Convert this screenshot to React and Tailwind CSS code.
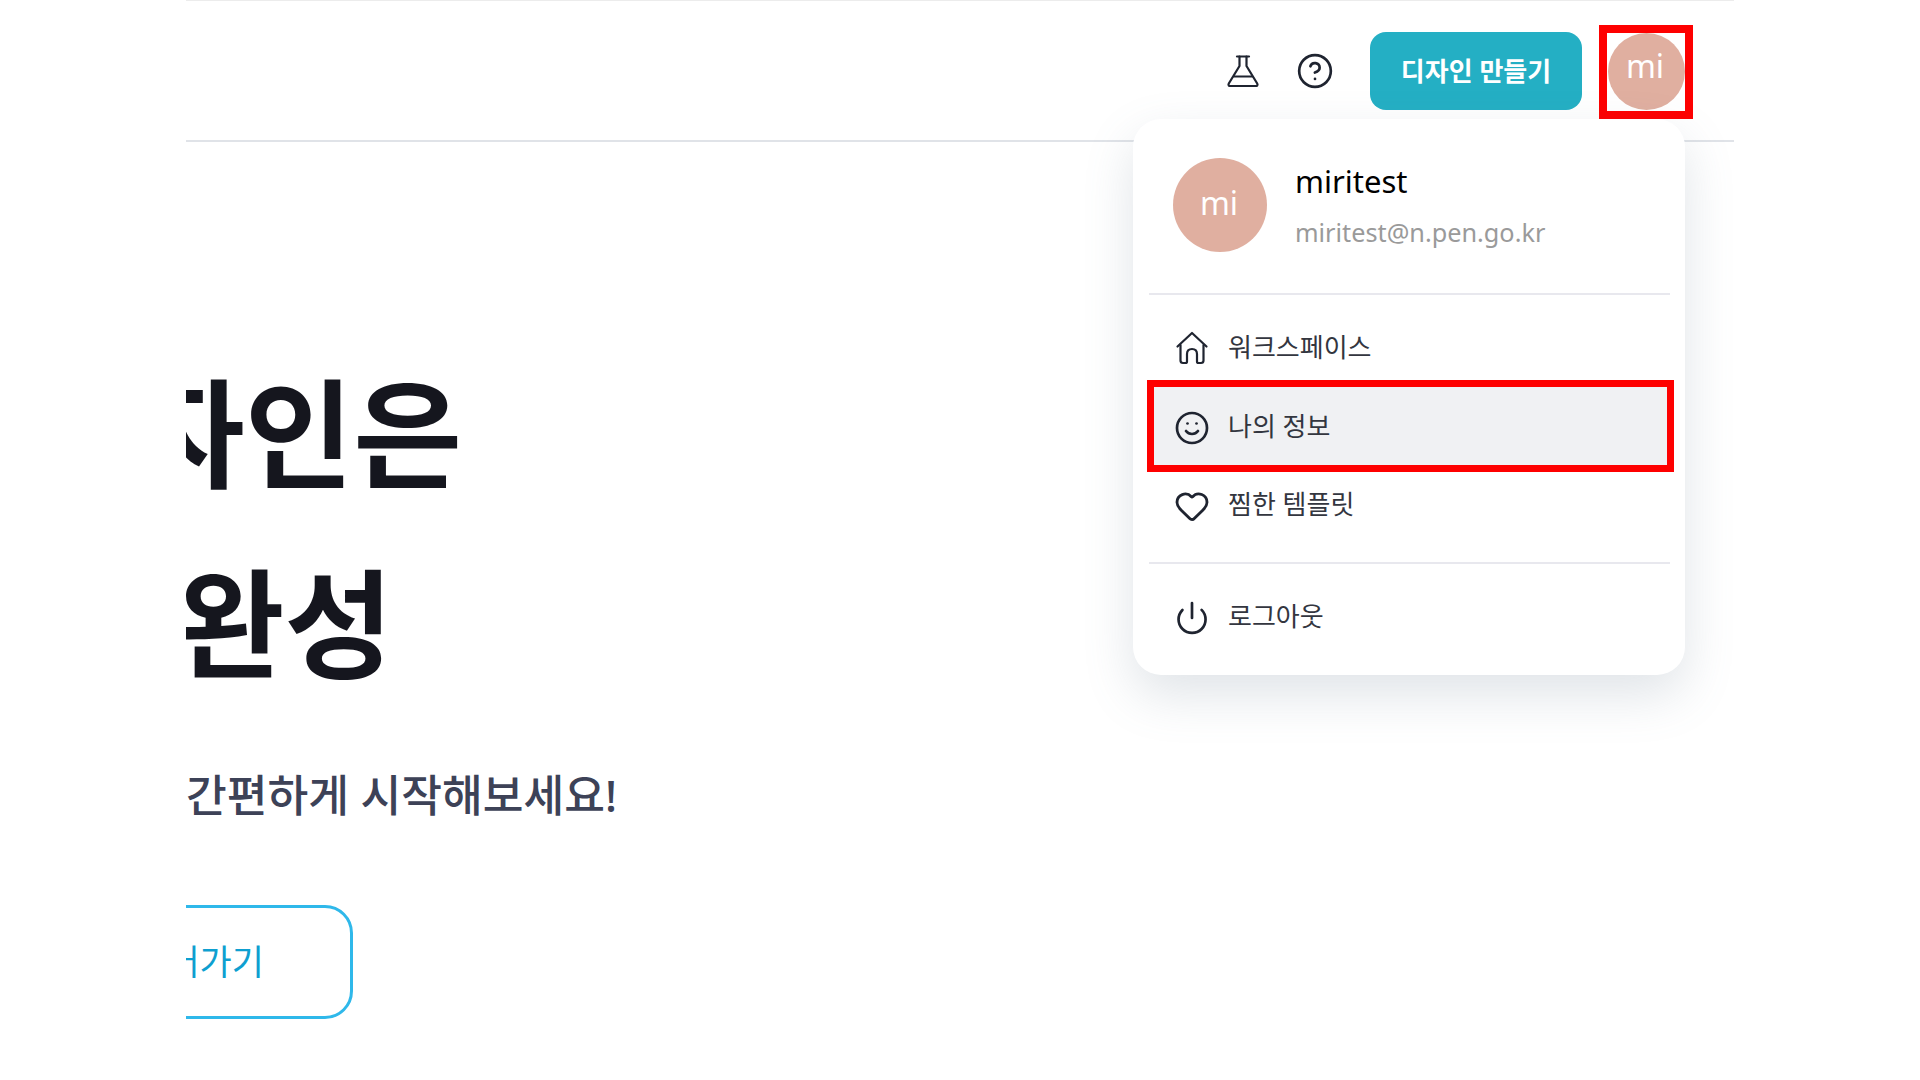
import React from "react";
import { CircleHelp, Smile, Heart, Power } from "lucide-react";

const KR = "font-['Noto_Sans','Noto_Sans_CJK_KR',sans-serif]";

function Flask() {
  return (
    <svg width="34" height="34" viewBox="0 0 34 34" fill="none" stroke="#1f2430" strokeWidth="2.2" strokeLinecap="round" strokeLinejoin="round">
      <path d="M11 2.500h12" />
      <path d="M13.500 2.500v9.500L2.800 29.500c-.8 1.500 0 2.500 1.500 2.500h25.400c1.500 0 2.300-1 1.500-2.500L20.500 12V2.500" />
      <path d="M8 22.500h18" />
    </svg>
  );
}

function Home() {
  return (
    <svg width="34" height="34" viewBox="0 0 34 34" fill="none" stroke="#1f2430" strokeWidth="2.2" strokeLinecap="round" strokeLinejoin="round">
      <path d="M2.500 15.500 17 2l14.500 13.500" />
      <path d="M5.500 14v15.500c0 1.500 1 2.500 2.500 2.500h2.500c1 0 1.500-.6 1.500-1.500V23c0-3 2-5 5-5s5 2 5 5v7.500c0 .9.5 1.500 1.500 1.500H26c1.500 0 2.500-1 2.500-2.500V14" />
    </svg>
  );
}

function Row({ icon, label, iconClass, gapClass }) {
  return (
    <div className={`h-[79px] flex items-center ${gapClass}`}>
      <span className={iconClass}>{icon}</span>
      <span className="text-[26px] leading-none text-[#33363f] -translate-y-[1px]">{label}</span>
    </div>
  );
}

export default function App() {
  return (
    <div className={`relative w-[1920px] h-[1080px] bg-white overflow-hidden ${KR}`}>
      <div className="ml-[186px] w-[1548px] h-full flex flex-col border-t border-[#ececec]">
        <header className="relative h-[141px] shrink-0 border-b-2 border-[#e0e3e8] flex items-center justify-end pr-[41px]">
          <div className="flex items-center">
            <Flask />
            <CircleHelp size={38} strokeWidth={1.7} color="#1f2430" className="ml-[36px]" />
            <button className="ml-[36px] w-[212px] h-[78px] rounded-[16px] bg-[#24afc4] text-white text-[26px] font-bold flex items-center justify-center pt-[2px]">
              디자인 만들기
            </button>
            <div className="ml-[17px] mt-[2px] w-[94px] h-[94px] border-[8px] border-[#fe0000] flex items-center justify-center">
              <div className="w-[77px] h-[77px] shrink-0 rounded-full bg-[#e0afa0] text-white text-[32px] flex items-center justify-center pb-[11px] pr-[2px]">
                mi
              </div>
            </div>
          </div>
        </header>

        <main className="overflow-hidden flex-1 pt-[197px]">
          <div className="w-[276px] h-[190px] flex justify-end items-center whitespace-nowrap text-[118px] font-bold leading-none text-[#15161e]">
            <span className="shrink-0">디자인은</span>
          </div>
          <div className="w-[207px] h-[190px] flex justify-end items-center whitespace-nowrap text-[118px] font-bold leading-none text-[#15161e]">
            <span className="shrink-0">완성</span>
          </div>
          <p className="mt-[46px] h-[60px] flex items-center whitespace-nowrap text-[44.300px] font-medium text-[#3d4257]">
            간편하게 시작해보세요!
          </p>
          <div className="mt-[80px] w-[167px] flex justify-end">
            <button className="shrink-0 w-[420px] h-[114px] rounded-[28px] border-[3px] border-[#2fb8ea] flex items-center justify-end pr-[86px] text-[35px] text-[#0e9fd0]">
              들어가기
            </button>
          </div>
        </main>
      </div>

      <div className="absolute left-[1133px] top-[119px] w-[552px] h-[556px] rounded-[28px] bg-white shadow-[0_20px_50px_rgba(100,120,140,0.2)] px-[16px] pt-[39px]">
        <div className="flex pl-[24px]">
          <div className="w-[94px] h-[94px] shrink-0 rounded-full bg-[#e0afa0] text-white text-[32px] flex items-center justify-center pb-[4px] pr-[2px]">
            mi
          </div>
          <div className="ml-[28px] flex flex-col">
            <span className="text-[31px] leading-[46px] text-black">miritest</span>
            <span className="mt-[8px] text-[25.250px] leading-[40px] text-[#9a9a9a]">miritest@n.pen.go.kr</span>
          </div>
        </div>
        <div className="mt-[41px] h-[2px] w-[521px] bg-[#e8e8ee]" />
        <div className="mt-[13px]">
          <Row icon={<Home />} label="워크스페이스" iconClass="block" gapClass="gap-[19px] pl-[26px]" />
          <div className="relative z-10 -mt-[7px] -mx-[2px] w-[527px] h-[92px] border-[7px] border-[#fe0000] bg-[#f0f1f3] flex items-center gap-[19px] pl-[20px]">
            <Smile size={36} strokeWidth={1.8} color="#1f2430" className="translate-y-[2px]" />
            <span className="text-[26px] leading-none text-[#33363f] -ml-[1px]">나의 정보</span>
          </div>
          <div className="-mt-[7px]">
            <Row icon={<Heart size={36} strokeWidth={1.9} color="#1f2430" />} label="찜한 템플릿" iconClass="block translate-y-[1px]" gapClass="gap-[18px] pl-[25px]" />
          </div>
        </div>
        <div className="mt-[18px] h-[2px] w-[521px] bg-[#e8e8ee]" />
        <div className="mt-[13px]">
          <Row icon={<Power size={36} strokeWidth={1.8} color="#1f2430" />} label="로그아웃" iconClass="block translate-y-[1px]" gapClass="gap-[18px] pl-[25px]" />
        </div>
      </div>
    </div>
  );
}
